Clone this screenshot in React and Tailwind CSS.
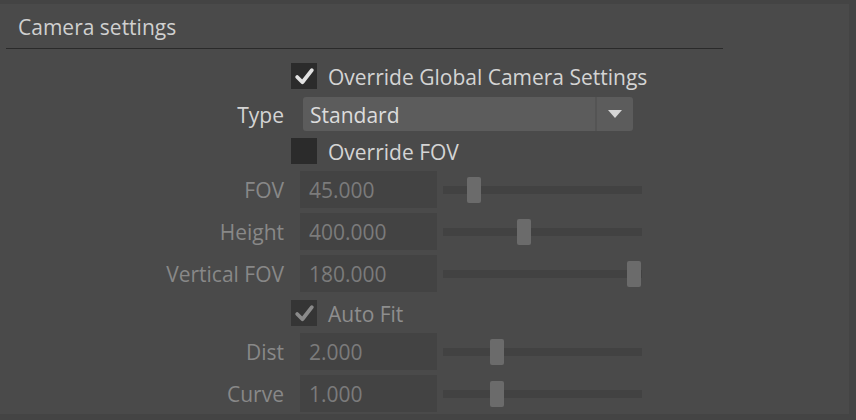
const sliders = [
  { label: "FOV", value: "45.000", pos: 24 },
  { label: "Height", value: "400.000", pos: 74 },
  { label: "Vertical FOV", value: "180.000", pos: 184 },
];

const fitSliders = [
  { label: "Dist", value: "2.000", pos: 47 },
  { label: "Curve", value: "1.000", pos: 47 },
];

const Check = ({ checked, dim }) => (
  <div
    className={`w-[26px] h-[26px] flex items-center justify-center ${
      dim ? "bg-[#353535]" : "bg-[#2b2b2b]"
    }`}
  >
    {checked && (
      <svg width="21" height="21" viewBox="0 0 20 20">
        <polyline
          points="3,10.5 8,15.5 17,4"
          fill="none"
          stroke={dim ? "#8a8a8a" : "#e2e2e2"}
          strokeWidth="3.6"
          strokeLinecap="round"
          strokeLinejoin="round"
        />
      </svg>
    )}
  </div>
);

const CheckRow = ({ label, checked, dim, className }) => (
  <div className={`flex items-center h-[26px] ${className}`}>
    <div className="w-[291px] shrink-0" />
    <Check checked={checked} dim={dim} />
    <span
      className={`ml-[11px] pt-[2px] text-[21px] leading-none ${
        dim ? "text-[#8e8e8e]" : "text-[#d4d4d4]"
      }`}
    >
      {label}
    </span>
  </div>
);

const SliderRow = ({ label, value, pos, className }) => (
  <div className={`flex items-center h-[37px] ${className}`}>
    <div className="w-[284px] shrink-0 pt-[2px] text-right text-[21px] text-[#888888] leading-none">
      {label}
    </div>
    <div className="ml-[16px] w-[137px] h-full bg-[#434343] flex items-center pl-[9px] pt-[2px] text-[21px] text-[#7b7b7b] leading-none">
      {value}
    </div>
    <div className="relative ml-[6px] w-[199px] h-full flex items-center">
      <div className="w-full h-[8px] bg-[#424242]" />
      <div
        className="absolute top-[6px] w-[14px] h-[26px] rounded-[2px] bg-[#6b6b6b]"
        style={{ left: pos }}
      />
    </div>
  </div>
);

export default function App() {
  return (
    <div
      className="w-[856px] h-[420px] bg-[#444444] pt-[4px] pr-[7px] pb-[6px] overflow-hidden"
      style={{ fontFamily: '"Open Sans", "Noto Sans", sans-serif' }}
    >
      <div className="h-full bg-[#4a4a4a]">
        <div className="h-[44px] flex items-center pl-[18px] pt-[3px] text-[21px] text-[#d0d0d0] leading-none">
          Camera settings
        </div>
        <div className="ml-[6px] w-[717px] h-px bg-[#2a2a2a]" />

        <CheckRow
          label="Override Global Camera Settings"
          checked
          className="mt-[14px]"
        />

        <div className="flex items-center h-[34px] mt-[8px]">
          <div className="w-[284px] shrink-0 pt-[2px] text-right text-[21px] text-[#d4d4d4] leading-none">
            Type
          </div>
          <div className="ml-[19px] w-[330px] h-full flex rounded-[3px] bg-[#5c5c5c] overflow-hidden">
            <div className="flex-1 flex items-center pl-[7px] pt-[2px] text-[21px] text-[#dcdcdc] leading-none">
              Standard
            </div>
            <div className="w-[2px] bg-[#545454]" />
            <div className="w-[36px] flex items-center justify-center">
              <svg width="16" height="10" viewBox="0 0 16 10">
                <polygon points="1,1 15,1 8,9" fill="#d6d6d6" />
              </svg>
            </div>
          </div>
        </div>

        <CheckRow label="Override FOV" className="mt-[7px]" />

        {sliders.map((s, i) => (
          <SliderRow
            key={s.label}
            {...s}
            className={i === 0 ? "mt-[7px]" : "mt-[5px]"}
          />
        ))}

        <CheckRow label="Auto Fit" checked dim className="mt-[8px]" />

        {fitSliders.map((s, i) => (
          <SliderRow
            key={s.label}
            {...s}
            className={i === 0 ? "mt-[7px]" : "mt-[5px]"}
          />
        ))}
      </div>
    </div>
  );
}
